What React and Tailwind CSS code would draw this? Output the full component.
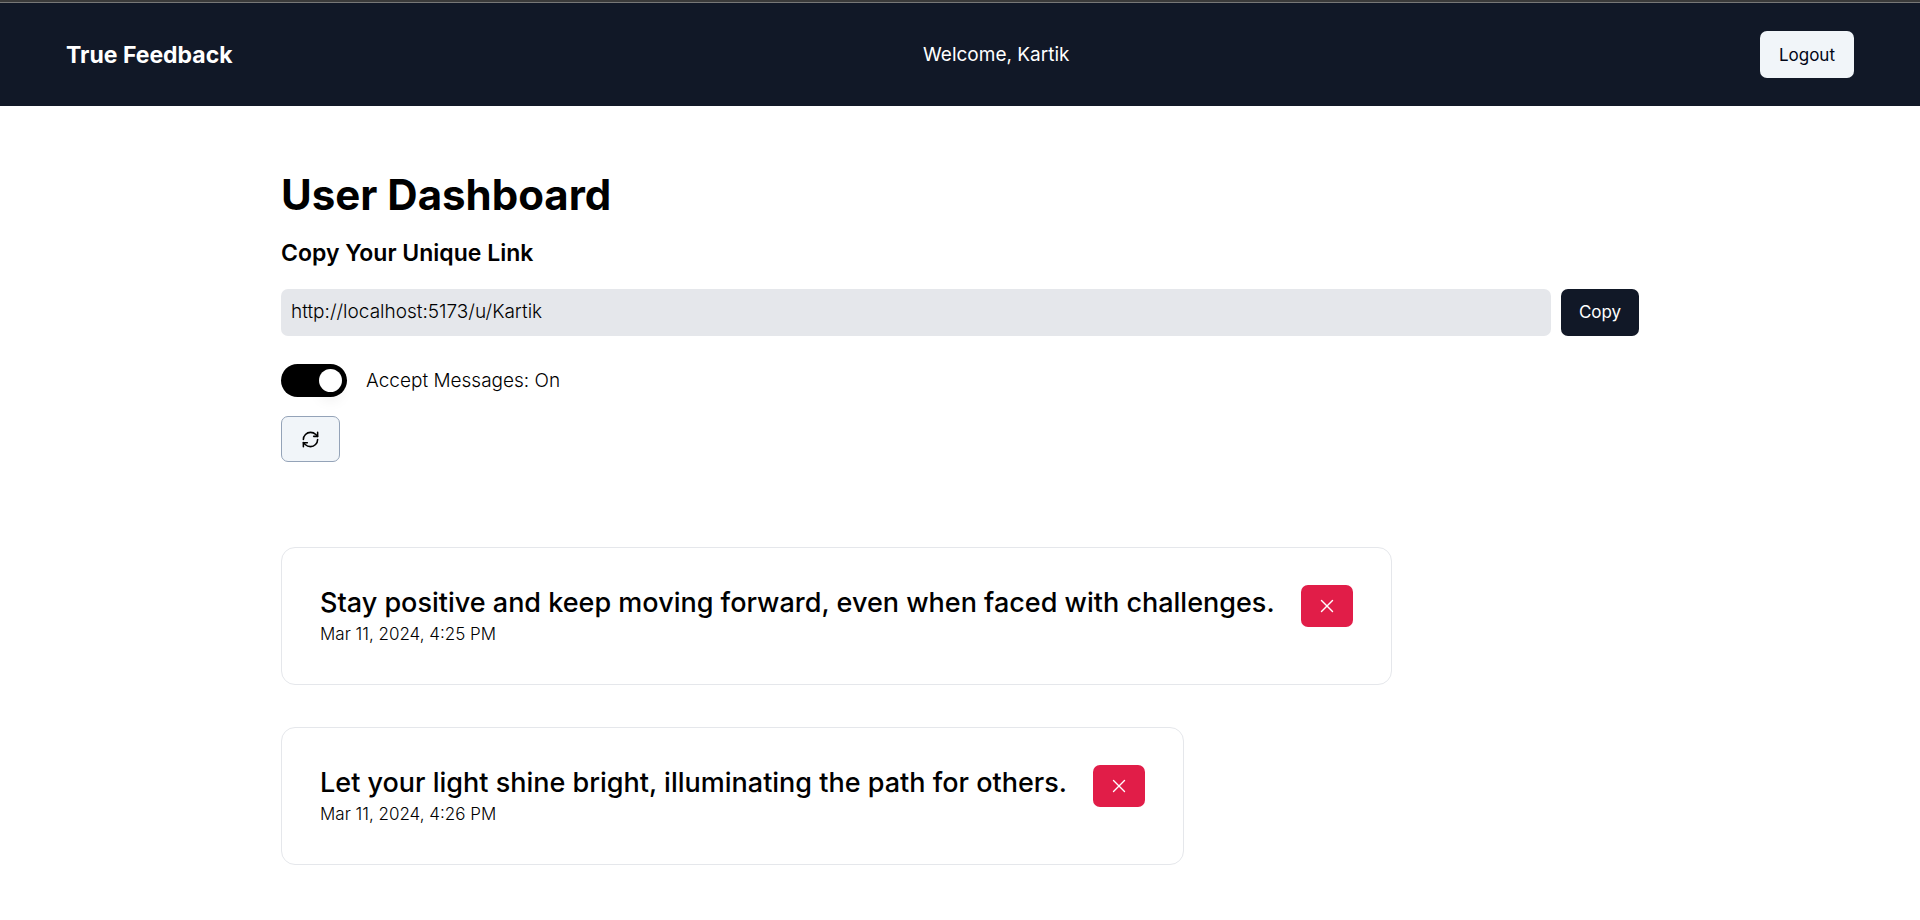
import { useState } from "react";
import { RefreshCw, X } from "lucide-react";

const initialMessages = [
  {
    id: 1,
    content: "Stay positive and keep moving forward, even when faced with challenges.",
    date: "Mar 11, 2024, 4:25 PM",
  },
  {
    id: 2,
    content: "Let your light shine bright, illuminating the path for others.",
    date: "Mar 11, 2024, 4:26 PM",
  },
];

function Navbar() {
  return (
    <header>
      <div className="h-[3px] border-b border-[#777777] bg-[#3a3a3a]" />
      <nav className="flex items-center justify-between bg-[#111827] px-[66px] py-7 text-white">
        <a href="#" className="text-[23px] leading-8 font-bold">
          True Feedback
        </a>
        <span className="text-[19px] leading-7">Welcome, Kartik</span>
        <button
          type="button"
          className="h-[47px] rounded-[7px] bg-[#f1f5f9] px-[19px] text-[17px] leading-6 text-[#020617]"
        >
          Logout
        </button>
      </nav>
    </header>
  );
}

function MessageCard({ message, onDelete }) {
  return (
    <article className="flex w-fit items-start gap-[26px] rounded-[14px] border border-[#e5e7eb] px-[38px] py-[37px]">
      <div>
        <h3 className="text-[27px] leading-9 font-medium">{message.content}</h3>
        <p className="text-[17px] leading-[26px] font-light">{message.date}</p>
      </div>
      <button
        type="button"
        aria-label="Delete message"
        onClick={onDelete}
        className="flex h-[42px] w-[52px] shrink-0 items-center justify-center rounded-[7px] bg-[#e11d48] text-white"
      >
        <X size={22} strokeWidth={1.5} />
      </button>
    </article>
  );
}

export default function App() {
  const [accepting, setAccepting] = useState(true);
  const [messages, setMessages] = useState(initialMessages);

  return (
    <div className="min-h-screen bg-white font-[Inter,sans-serif] text-black">
      <Navbar />
      <main className="px-[281px] pt-[65px] pb-12">
        <h1 className="text-[42px] leading-[48px] font-bold">User Dashboard</h1>
        <label htmlFor="link" className="mt-[17px] block text-[23px] leading-[34px] font-semibold">
          Copy Your Unique Link
        </label>
        <div className="mt-[19px] flex gap-[10px]">
          <input
            id="link"
            readOnly
            value="http://localhost:5173/u/Kartik"
            className="h-[47px] min-w-0 flex-1 rounded-[7px] bg-[#e5e7eb] px-[10px] pb-[2px] text-[19px] font-light"
          />
          <button type="button" className="h-[47px] w-[78px] rounded-[7px] bg-[#111827] text-[17px] text-white">
            Copy
          </button>
        </div>
        <label className="mt-7 flex w-fit items-center gap-[19px]">
          <input
            type="checkbox"
            role="switch"
            checked={accepting}
            onChange={() => setAccepting(!accepting)}
            className="flex h-[33px] w-[66px] appearance-none items-center rounded-full bg-slate-300 p-[5px] before:size-[23px] before:rounded-full before:bg-white before:shadow-lg checked:justify-end checked:bg-black"
          />
          <span className="text-[19px] leading-7 font-light">Accept Messages: {accepting ? "On" : "Off"}</span>
        </label>
        <button
          type="button"
          aria-label="Refresh messages"
          className="mt-[19px] flex h-[46px] w-[59px] items-center justify-center rounded-[7px] border border-[#94a3b8] bg-[#f1f5f9]"
        >
          <RefreshCw size={19} />
        </button>
        <section aria-label="Messages" className="mt-[85px] flex flex-col gap-[42px]">
          {messages.map((message) => (
            <MessageCard
              key={message.id}
              message={message}
              onDelete={() => setMessages(messages.filter((m) => m.id !== message.id))}
            />
          ))}
        </section>
      </main>
    </div>
  );
}
